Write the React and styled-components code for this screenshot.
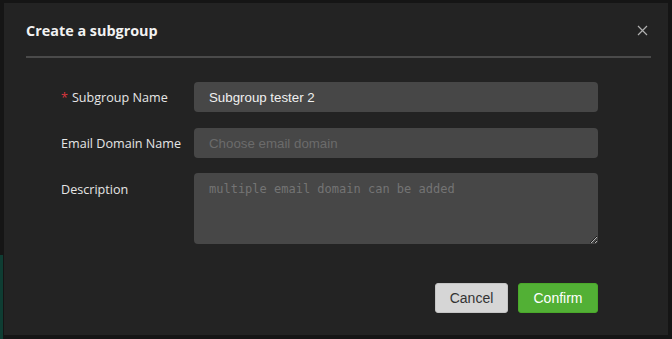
import React from "react";
import styled, { createGlobalStyle } from "styled-components";

const GlobalStyle = createGlobalStyle`
  html, body {
    margin: 0;
    padding: 0;
    background: #151515;
    height: 339px;
    overflow: hidden;
  }
`;

const Backdrop = styled.div`
  height: 339px;
  padding: 3px 4px 4px 4px;
  box-sizing: border-box;
  background: linear-gradient(to right, #0f3d33 0 3px, transparent 3px) 0 255px / 4px 84px no-repeat, #151515;
`;

const Dialog = styled.div`
  width: 664px;
  height: 332px;
  background: #232323;
  display: flex;
  flex-direction: column;
  font-family: "Open Sans", "Liberation Sans", sans-serif;
`;

const Header = styled.div`
  display: flex;
  align-items: center;
  justify-content: space-between;
  margin: 0 17px 0 22px;
  height: 55px;
  border-bottom: 2px solid #4a4a4a;
  box-sizing: border-box;
  padding-top: 2px;
`;

const Title = styled.h2`
  margin: 0;
  font-size: 14.4px;
  font-weight: 700;
  color: #f2f2f2;
`;

const CloseButton = styled.button`
  background: none;
  border: none;
  padding: 0;
  margin-right: 2px;
  margin-top: 0;
  width: 14px;
  height: 14px;
  display: flex;
  align-items: center;
  justify-content: center;
  cursor: pointer;
`;

const Form = styled.div`
  display: flex;
  flex-direction: column;
  gap: 15px;
  padding: 24px 70px 0 57px;
`;

const Row = styled.div`
  display: grid;
  grid-template-columns: 133px 1fr;
  align-items: ${(p) => (p.$top ? "start" : "center")};
  margin-bottom: ${(p) => (p.$first ? "1px" : "0")};
`;

const Label = styled.label`
  font-size: 12.6px;
  color: #e6e6e6;
  padding-top: ${(p) => (p.$top ? "8px" : "0")};
`;

const Star = styled.span`
  color: #d9363e;
  margin-right: 4px;
`;

const Input = styled.input`
  height: 30px;
  box-sizing: border-box;
  border: none;
  border-radius: 4px;
  background: #474747;
  padding: 0 15px;
  font-family: "Liberation Sans", Arial, sans-serif;
  font-size: 13.3px;
  color: #f0f0f0;
  outline: none;
  &::placeholder {
    color: #6b6b6b;
  }
`;

const TextArea = styled.textarea`
  height: 71px;
  box-sizing: border-box;
  border: none;
  border-radius: 4px;
  background: #474747;
  padding: 9px 15px;
  font-family: "DejaVu Sans Mono", "Liberation Mono", monospace;
  font-size: 12px;
  color: #f0f0f0;
  outline: none;
  resize: vertical;
  &::placeholder {
    color: #747474;
  }
`;

const Footer = styled.div`
  display: flex;
  justify-content: flex-end;
  gap: 10px;
  padding: 39px 70px 0 0;
`;

const Button = styled.button`
  height: 30px;
  min-width: ${(p) => (p.$primary ? "80px" : "73px")};
  border-radius: 3px;
  border: 1px solid ${(p) => (p.$primary ? "#4aa82a" : "#c4c4c4")};
  background: ${(p) => (p.$primary ? "#52b035" : "#d6d6d6")};
  color: ${(p) => (p.$primary ? "#ffffff" : "#333333")};
  font-family: "Liberation Sans", Arial, sans-serif;
  font-size: 14px;
  cursor: pointer;
`;

export default function App() {
  return (
    <>
      <GlobalStyle />
      <Backdrop>
        <Dialog>
          <Header>
            <Title>Create a subgroup</Title>
            <CloseButton aria-label="close">
              <svg width="11" height="11" viewBox="0 0 11 11">
                <path d="M1 1L10 10M10 1L1 10" stroke="#b0b0b0" strokeWidth="1.2" />
              </svg>
            </CloseButton>
          </Header>
          <Form>
            <Row $first>
              <Label>
                <Star>*</Star>Subgroup Name
              </Label>
              <Input defaultValue="Subgroup tester 2" />
            </Row>
            <Row>
              <Label>Email Domain Name</Label>
              <Input placeholder="Choose email domain" />
            </Row>
            <Row $top>
              <Label $top>Description</Label>
              <TextArea placeholder="multiple email domain can be added" />
            </Row>
          </Form>
          <Footer>
            <Button>Cancel</Button>
            <Button $primary>Confirm</Button>
          </Footer>
        </Dialog>
      </Backdrop>
    </>
  );
}
